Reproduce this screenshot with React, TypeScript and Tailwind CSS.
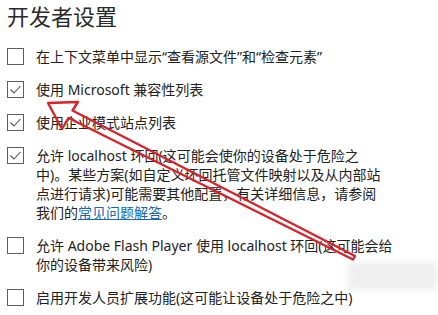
import React from "react";

const Box = ({ checked }: { checked?: boolean }) => (
  <div className="mt-[1px] h-[17px] w-[17px] shrink-0 border border-[#5e5e5e] bg-white">
    {checked && (
      <svg width="15" height="15" viewBox="0 0 15 15" className="block">
        <path d="M2.5 7.5 L6 11 L12.5 4" fill="none" stroke="#555" strokeWidth="1.1" />
      </svg>
    )}
  </div>
);

const Row = ({ checked, children }: { checked?: boolean; children: React.ReactNode }) => (
  <div className="flex gap-[12px]">
    <Box checked={checked} />
    <div className="text-[14px] leading-[19px] text-[#222222]">{children}</div>
  </div>
);

export default function App() {
  return (
    <div
      className="relative h-[315px] w-[438px] overflow-hidden bg-white"
      style={{ fontFamily: '"Noto Sans", "Noto Sans CJK SC", sans-serif' }}
    >
      <div className="pl-[7px] pt-[3px]">
        <h1 className="text-[22px] leading-[26px] text-[#2a2a2a]">开发者设置</h1>
        <div className="mt-[18px] flex flex-col gap-[14px]">
          <Row>在上下文菜单中显示“查看源文件”和“检查元素”</Row>
          <Row checked>使用 Microsoft 兼容性列表</Row>
          <Row checked>使用企业模式站点列表</Row>
          <Row checked>
            <span className="block">允许 localhost 环回(这可能会使你的设备处于危险之</span>
            <span className="block">中)。某些方案(如自定义环回托管文件映射以及从内部站</span>
            <span className="block">点进行请求)可能需要其他配置，有关详细信息，请参阅</span>
            <span className="block">
              我们的<span className="text-[#1a67b3] underline">常见问题解答</span>。
            </span>
          </Row>
          <Row>
            <span className="block">允许 Adobe Flash Player 使用 localhost 环回(这可能会给</span>
            <span className="block">你的设备带来风险)</span>
          </Row>
          <Row>启用开发人员扩展功能(这可能让设备处于危险之中)</Row>
        </div>
      </div>
      <div className="absolute left-[348px] top-[262px] h-[28px] w-[90px] bg-[#efefef] blur-[3px]" />
      <svg className="absolute left-0 top-0" width="438" height="315" viewBox="0 0 438 315">
        <polygon
          points="48,103 78,102 72.5,110.5 355,256 353,259.5 68.5,118 62,129"
          fill="none"
          stroke="#d9232b"
          strokeWidth="2.4"
          strokeLinejoin="round"
        />
      </svg>
    </div>
  );
}
